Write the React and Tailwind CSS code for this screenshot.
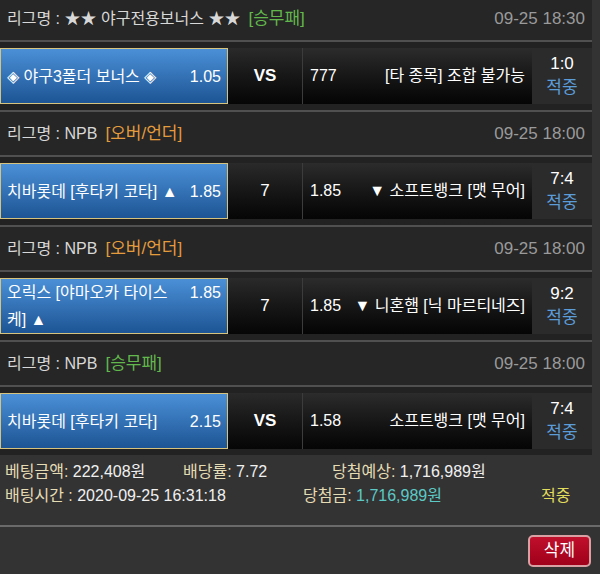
import React from 'react';

const bets = [
  {
    league: '리그명 : ★★ 야구전용보너스 ★★',
    tag: '[승무패]',
    tagColor: 'text-[#62b84c]',
    date: '09-25 18:30',
    home: '◈ 야구3폴더 보너스 ◈',
    homeOdds: '1.05',
    mid: 'VS',
    awayOdds: '777',
    away: '[타 종목] 조합 불가능',
    score: '1:0',
  },
  {
    league: '리그명 : NPB',
    tag: '[오버/언더]',
    tagColor: 'text-[#e39b3c]',
    date: '09-25 18:00',
    home: '치바롯데 [후타키 코타] ▲',
    homeOdds: '1.85',
    mid: '7',
    awayOdds: '1.85',
    away: '▼ 소프트뱅크 [맷 무어]',
    score: '7:4',
  },
  {
    league: '리그명 : NPB',
    tag: '[오버/언더]',
    tagColor: 'text-[#e39b3c]',
    date: '09-25 18:00',
    home: '오릭스 [야마오카 타이스 케] ▲',
    homeOdds: '1.85',
    mid: '7',
    awayOdds: '1.85',
    away: '▼ 니혼햄 [닉 마르티네즈]',
    score: '9:2',
    wrap: true,
  },
  {
    league: '리그명 : NPB',
    tag: '[승무패]',
    tagColor: 'text-[#62b84c]',
    date: '09-25 18:00',
    home: '치바롯데 [후타키 코타]',
    homeOdds: '2.15',
    mid: 'VS',
    awayOdds: '1.58',
    away: '소프트뱅크 [맷 무어]',
    score: '7:4',
  },
];

function BetSection({ bet }) {
  return (
    <div className="border-t-2 border-[#505050]">
      <div className="h-[45px] bg-[#262626] flex items-center justify-between px-[7px] border-b-2 border-[#505050]">
        <div className="text-[#d8d8d8]">
          {bet.league}
          <span className={`ml-[8px] text-[17px] ${bet.tagColor}`}>{bet.tag}</span>
        </div>
        <div className="text-[#9a9a9a] text-[17px]">{bet.date}</div>
      </div>
      <div className="h-[68px] bg-[#222222] flex items-start pt-[6px]">
        <div className="w-[228px] h-[56px] shrink-0 flex items-center px-[6px] border border-[#d6c47e] bg-gradient-to-b from-[#4b90d7] to-[#1d5595] text-white leading-[27px]">
          <div className="flex w-full items-start justify-between">
            <span className={bet.wrap ? 'flex-1 pr-[12px]' : 'whitespace-nowrap'}>{bet.home}</span>
            <span className="shrink-0">{bet.homeOdds}</span>
          </div>
        </div>
        <div className="w-[74px] h-[56px] shrink-0 flex items-center justify-center bg-gradient-to-b from-[#2a2a2a] to-[#060606] text-white">
          {bet.mid === 'VS' ? (
            <span className="font-bold text-[17px]">VS</span>
          ) : (
            <span className="text-[17px]">{bet.mid}</span>
          )}
        </div>
        <div className="w-[230px] h-[56px] shrink-0 flex items-center justify-between pl-[7px] pr-[7px] border-l border-[#3c3c3c] bg-gradient-to-b from-[#2c2c2c] to-[#050505] text-white whitespace-nowrap">
          <span>{bet.awayOdds}</span>
          <span>{bet.away}</span>
        </div>
        <div className="w-[60px] h-[56px] shrink-0 flex flex-col items-center justify-center leading-[24px] bg-[#2b2b2b] text-[17px]">
          <span className="text-white">{bet.score}</span>
          <span className="text-[#5b9ddb]">적중</span>
        </div>
      </div>
    </div>
  );
}

export default function App() {
  return (
    <div
      className="w-[600px] h-[574px] bg-[#333333] overflow-hidden text-[16px]"
      style={{ fontFamily: '"Liberation Sans", "Noto Sans CJK KR", sans-serif' }}
    >
      <div className="w-[592px] mt-[-5px]">
        {bets.map((bet, i) => (
          <BetSection key={i} bet={bet} />
        ))}
      </div>

      <div className="h-[70px] pt-[5px] px-[5px] leading-[24px]">
        <div className="flex">
          <span className="w-[178px]">
            <span className="text-[#e6dcb4]">베팅금액: </span>
            <span className="text-[#f0f0f0]">222,408원</span>
          </span>
          <span className="w-[149px]">
            <span className="text-[#e6dcb4]">배당률: </span>
            <span className="text-[#f0f0f0]">7.72</span>
          </span>
          <span>
            <span className="text-[#e6dcb4]">당첨예상: </span>
            <span className="text-[#f0f0f0]">1,716,989원</span>
          </span>
        </div>
        <div className="flex">
          <span className="w-[298px]">
            <span className="text-[#e6dcb4]">배팅시간 : </span>
            <span className="text-[#f0f0f0]">2020-09-25 16:31:18</span>
          </span>
          <span className="w-[238px]">
            <span className="text-[#e6dcb4]">당첨금: </span>
            <span className="text-[#5cc9c6]">1,716,989원</span>
          </span>
          <span className="text-[#e2dc5c]">적중</span>
        </div>
      </div>

      <div className="border-t-2 border-[#6a6a6a] flex justify-end pt-[8px] pr-[9px]">
        <button className="w-[63px] h-[32px] rounded-[5px] border-2 border-[#d9a0a4] bg-gradient-to-b from-[#c0102c] to-[#a0001a] text-white text-[17px]">
          삭제
        </button>
      </div>
    </div>
  );
}
